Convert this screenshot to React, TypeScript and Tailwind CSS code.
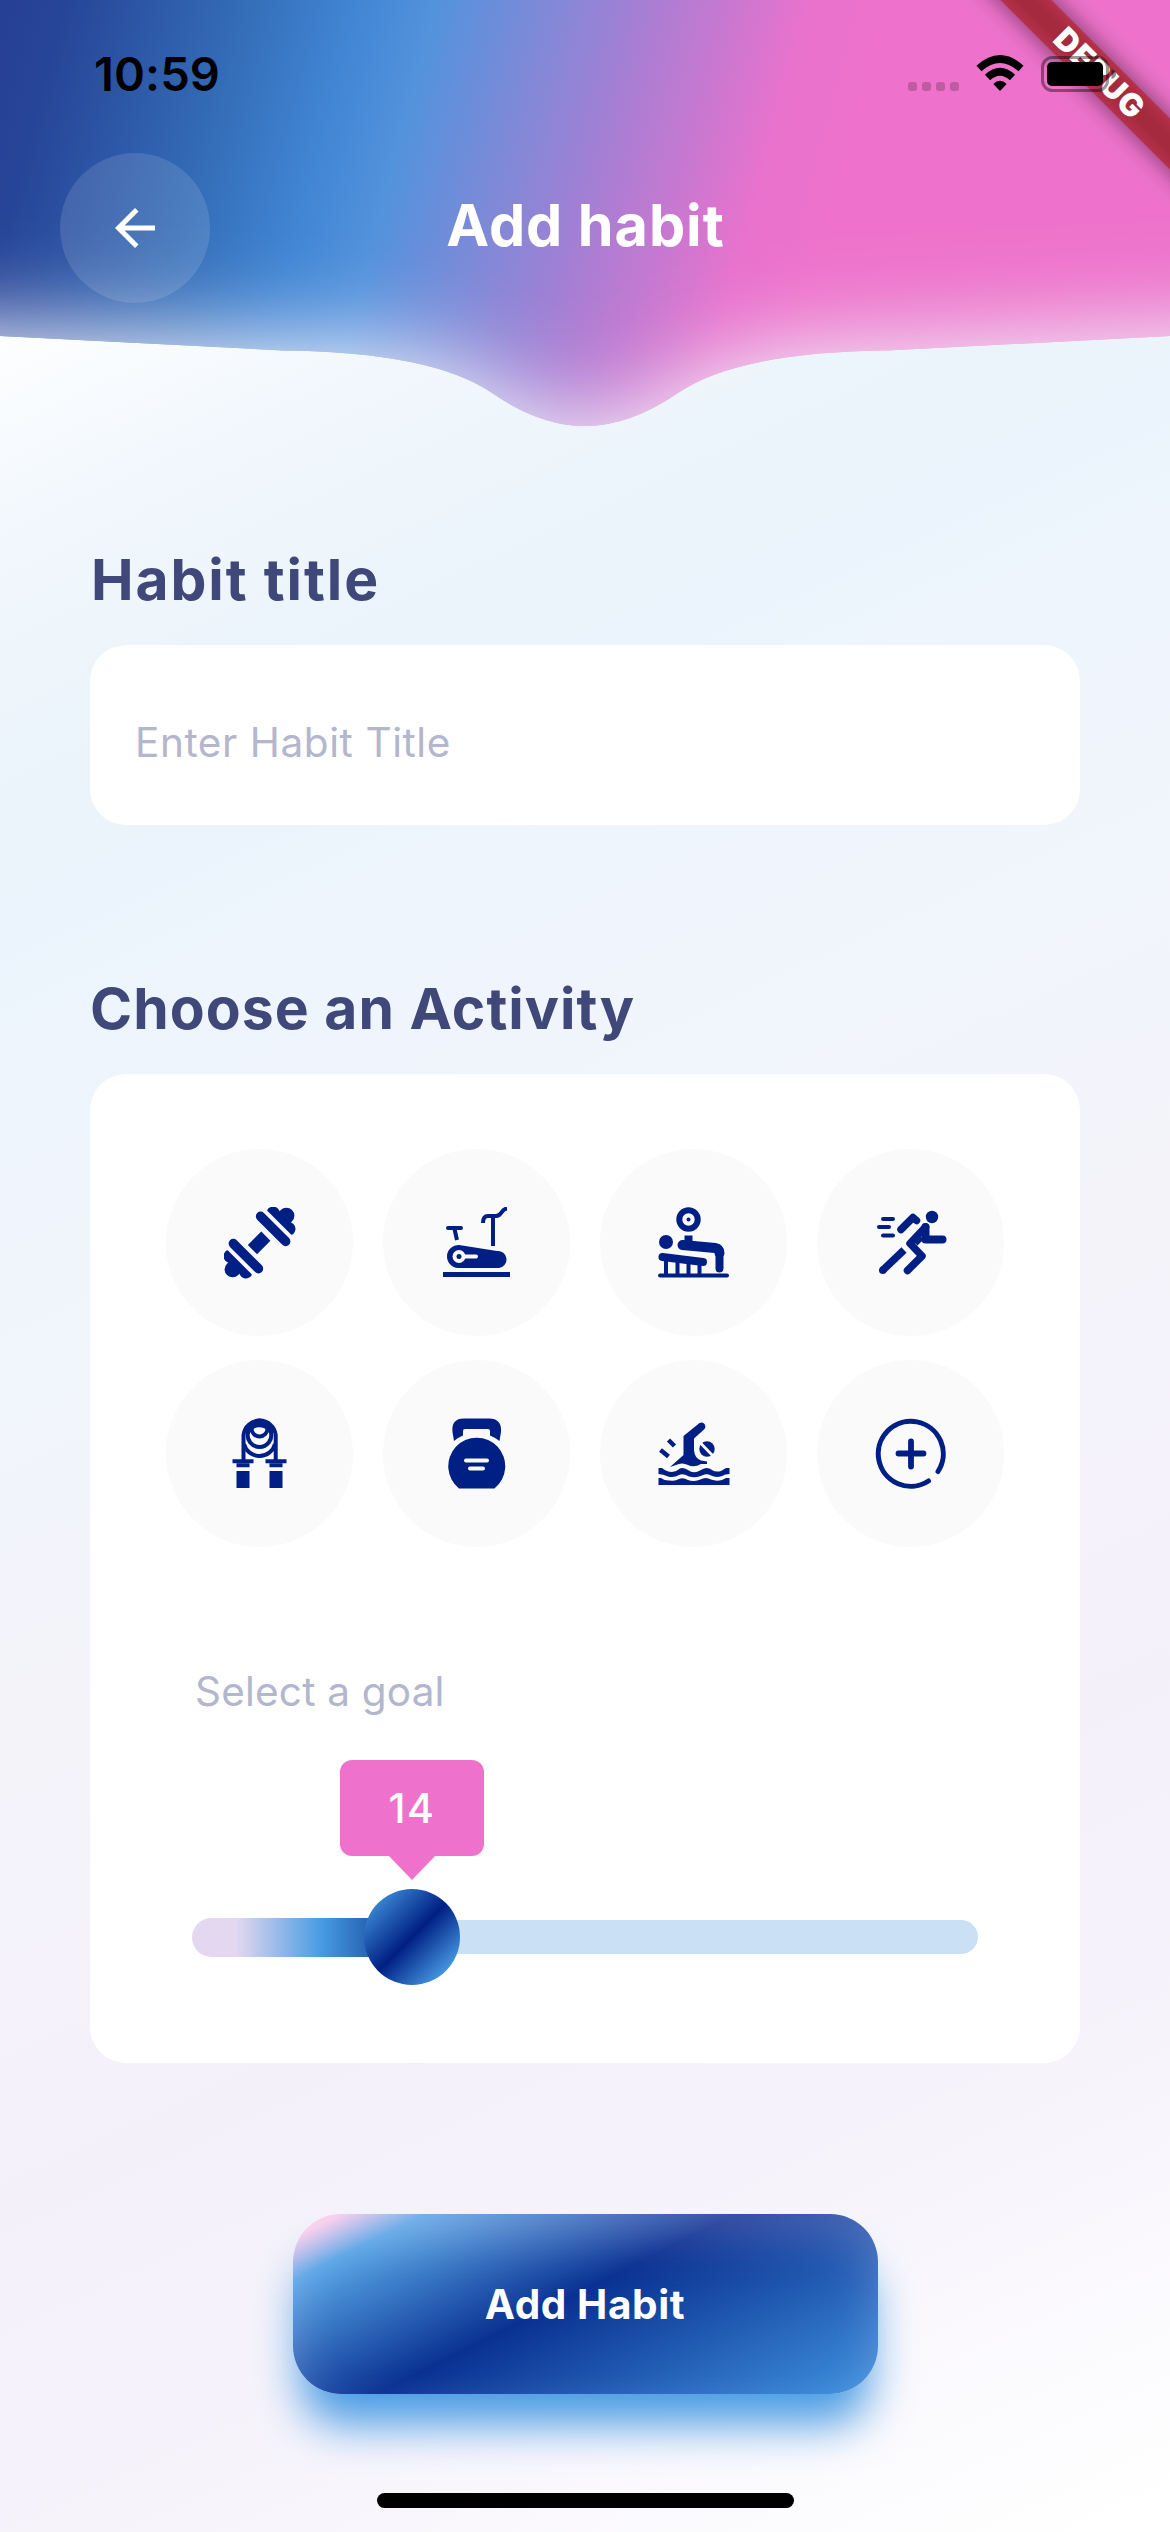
import type { ReactNode } from "react";

const NAVY = "#001f84";

function StatusBar() {
  return (
    <div className="absolute inset-x-0 top-0 z-20 flex h-[141px] justify-between pl-[94px] pr-[54px]">
      <div className="mt-[45px] h-[57px] text-[47px] font-semibold leading-[57px] tracking-[0.1px] text-black">
        10:59
      </div>
      <svg className="mt-[54px] h-[40px] w-[209px]" viewBox="906 54 209 40">
        {[907, 921, 935, 949].map((x) => (
          <rect key={x} x={x} y="82" width="9" height="9" rx="3" fill="#000" fillOpacity="0.2" />
        ))}
        <path d="M978 68.500 Q999 49.500 1020 68.500" fill="none" stroke="#000" strokeWidth="7.500" />
        <path d="M986.500 77.500 Q999 66 1011.500 77.500" fill="none" stroke="#000" strokeWidth="7.500" />
        <path d="M992.300 84 Q999 77.500 1005.700 84 L999 91Z" />
        <rect x="1041.500" y="57.500" width="65" height="33" rx="10" fill="none" stroke="#000" strokeOpacity="0.4" strokeWidth="3" />
        <rect x="1046" y="62" width="56" height="24" rx="5" />
        <path d="M1110.500 69 Q1115 70.500 1115 74 Q1115 77.500 1110.500 79Z" fillOpacity="0.45" />
      </svg>
    </div>
  );
}

function DebugBanner() {
  return (
    <div className="absolute right-0 top-0 z-10 h-[240px] w-[240px] overflow-hidden">
      <div className="absolute left-[-32px] top-[54px] h-[36px] w-[400px] rotate-45 bg-black/50 blur-[12px]" />
      <div className="absolute left-[-32px] top-[54px] flex h-[36px] w-[400px] rotate-45 items-center justify-center bg-[#b71c1ca0] pl-[4px] text-[31.500px] font-black leading-none tracking-[0.8px] text-white">
        DEBUG
      </div>
    </div>
  );
}

const HEADER_PATH =
  "M0 0H1170V336L887 350.500Q738 352 678 393Q630 426 585 426Q540 426 492 393Q432 352 283 350.500L0 336Z";
const HAZE_PATH =
  "M-200 318L0 328L283 342.500Q432 344 492 387Q540 422 585 422Q630 422 678 387Q738 344 887 342.500L1170 328L1370 318V700H-200Z";

function Header() {
  return (
    <header className="relative h-[426px]">
      <svg className="absolute inset-0 h-[426px] w-[1170px]" viewBox="0 0 1170 426">
        <defs>
          <linearGradient id="sky" gradientUnits="userSpaceOnUse" x1="0" y1="0" x2="1240" y2="323">
            <stop offset="0" stopColor="#253f95" />
            <stop offset="0.05" stopColor="#274598" />
            <stop offset="0.18" stopColor="#336bb6" />
            <stop offset="0.27" stopColor="#4186d4" />
            <stop offset="0.33" stopColor="#5392dc" />
            <stop offset="0.39" stopColor="#738cd9" />
            <stop offset="0.5" stopColor="#ad7dd3" />
            <stop offset="0.61" stopColor="#e872cd" />
            <stop offset="0.67" stopColor="#ee72cb" />
            <stop offset="1" stopColor="#ee72cb" />
          </linearGradient>
          <clipPath id="wave">
            <path d={HEADER_PATH} />
          </clipPath>
          <filter id="soft" filterUnits="userSpaceOnUse" x="-200" y="0" width="1570" height="720">
            <feGaussianBlur stdDeviation="45" />
          </filter>
        </defs>
        <g clipPath="url(#wave)">
          <rect width="1170" height="426" fill="url(#sky)" />
          <path d={HAZE_PATH} fill="#f0eef8" filter="url(#soft)" />
        </g>
      </svg>
      <div className="relative flex h-[303px] items-end px-[60px]">
        <button className="flex h-[150px] w-[150px] items-center justify-center rounded-full bg-white/12">
          <svg viewBox="0 0 24 24" className="h-[60px] w-[60px]" fill="#fff">
            <path d="M20 11H7.830l5.590-5.590L12 4l-8 8 8 8 1.410-1.410L7.830 13H20v-2z" />
          </svg>
        </button>
        <h1 className="flex h-[150px] flex-1 items-center justify-center pr-[149px] pb-[4px] text-[57.500px] font-bold leading-none tracking-[0.950px] text-white">
          Add habit
        </h1>
      </div>
    </header>
  );
}

function Dumbbell() {
  return (
    <g transform="translate(35.500 35.500) rotate(-45)" fill={NAVY}>
      <rect x="-10" y="-6.500" width="19" height="13" />
      <rect x="14.500" y="-22.500" width="9.500" height="45" rx="4.750" />
      <rect x="-24" y="-22.500" width="9.500" height="45" rx="4.750" />
      <path d="M28 -17 Q29 -18.500 32 -17.500 Q37 -16 37 -11 L35 0 L37 11 Q37 16 32 17.500 Q29 18.500 28 17Z" />
      <circle cx="38" cy="0" r="8" />
      <path d="M-28 -17 Q-29 -18.500 -32 -17.500 Q-37 -16 -37 -11 L-35 0 L-37 11 Q-37 16 -32 17.500 Q-29 18.500 -28 17Z" />
      <circle cx="-38" cy="0" r="8" />
    </g>
  );
}

function Bike() {
  return (
    <g>
      <rect x="2" y="65" width="67" height="5" fill={NAVY} />
      <path d="M18 38 L56 44 A8.500 8.500 0 0 1 58 61 H17 A11.500 11.500 0 0 1 18 38Z" fill={NAVY} />
      <g fill="none" stroke={NAVY} strokeLinecap="round">
        <path d="M7 21H20" strokeWidth="4" />
        <path d="M13.500 22L16 33" strokeWidth="4" strokeLinecap="butt" />
        <path d="M52 10V39" strokeWidth="4" strokeLinecap="butt" />
        <path d="M42 16C42 11 44 9 47 9H55C61 9 60 2 66 1.500" strokeWidth="4" strokeLinecap="butt" />
      </g>
      <path d="M18 49.500H35" stroke="#fafafa" strokeWidth="4" strokeLinecap="round" />
      <circle cx="18" cy="49.500" r="6.500" fill="#fafafa" />
      <circle cx="18" cy="49.500" r="2.500" fill={NAVY} />
    </g>
  );
}

function BenchPress() {
  return (
    <g fill="none" stroke={NAVY} strokeLinecap="round">
      <circle cx="30.500" cy="12.500" r="9.200" strokeWidth="6" />
      <circle cx="30.500" cy="12.500" r="2" fill={NAVY} stroke="none" />
      <rect x="26.500" y="28.500" width="8" height="8" fill={NAVY} stroke="none" />
      <circle cx="8" cy="35" r="7" fill={NAVY} stroke="none" />
      <path d="M24.500 38L57 41Q61.500 42 61.500 46" strokeWidth="10" />
      <path d="M61.500 44V61.500" strokeWidth="8" />
      <path d="M4.500 50L45 55" strokeWidth="8" />
      <path d="M8 50V69M19.500 53V69M30.500 54V69M41.500 55V69" strokeWidth="4" strokeLinecap="butt" />
      <path d="M2 68.500H69" strokeWidth="4" />
    </g>
  );
}

function Runner() {
  return (
    <g fill="none" stroke={NAVY}>
      <circle cx="57" cy="10" r="6.200" fill={NAVY} stroke="none" />
      <path d="M8 12H18M4 20H14M8 28.500H18" strokeWidth="4" strokeLinecap="round" />
      <path d="M26 22.500L38 10.500L41.500 13.500" strokeWidth="7.500" strokeLinejoin="round" strokeLinecap="round" />
      <path d="M50.500 20L35 36.500L47 49L32.500 63.500" strokeWidth="7.500" strokeLinejoin="round" strokeLinecap="round" />
      <path d="M50.500 20V32.500H67.500" strokeWidth="8" strokeLinejoin="round" strokeLinecap="round" />
      <path d="M46 30L40 36" strokeWidth="7" />
      <path d="M29 43L7.500 63.500" strokeWidth="7.500" />
      <circle cx="7.800" cy="63.200" r="3.800" fill={NAVY} stroke="none" />
    </g>
  );
}

function JumpRope() {
  return (
    <g fill="none" stroke={NAVY}>
      <path d="M19.500 42V17A16.200 16.200 0 0 1 51.700 17V42" strokeWidth="4" />
      <path d="M22.500 15A14 14 0 0 1 48.500 15" strokeWidth="6" />
      <circle cx="35.500" cy="10.500" r="8" strokeWidth="4" />
      <path d="M24 14.500A11.800 11.800 0 1 0 47 14.500" strokeWidth="4" />
      <path d="M20 26A16 16 0 0 0 51 26" strokeWidth="4" />
      <path d="M8.500 43.200H29.500M41.500 43.200H62.500" strokeWidth="4" />
      <path d="M12.500 47.300H25.500M45.500 47.300H58.500" strokeWidth="4" />
      <path d="M12.500 61.500H25.500M45.500 61.500H58.500" strokeWidth="17" />
    </g>
  );
}

function Kettlebell() {
  return (
    <g fill={NAVY}>
      <path d="M13 23L11.500 14Q10 0.500 23 0.500H48Q61 0.500 60 14L58.500 23Q55 20 49 17.500L49 13Q49 11 47 11H24Q22 11 22 13V17.500Q16 20 13 23Z" />
      <path d="M18 70.500A28.500 28.500 0 1 1 53.500 70.500Z" />
      <path d="M25 42.500H46M29 50.500H42" stroke="#fafafa" strokeWidth="4" strokeLinecap="round" />
    </g>
  );
}

function Swimmer() {
  return (
    <g fill={NAVY}>
      <path d="M25.500 18L41.500 5Q44.500 3.500 46.500 6Q48.500 9 46 11.500L36 20.500V32Q36.500 40 43 42.500L49 43.500V46L43 46Q36 50 30 47Q24 44 18 47L12 49L25.500 37Z" />
      <circle cx="49" cy="31" r="7.700" />
      <path d="M41.500 24L56 39" stroke="#fafafa" strokeWidth="2.800" />
      <path d="M10.500 22L16.500 28M2.500 32L10.500 38.500" stroke={NAVY} strokeWidth="4.500" />
      <path d="M0.500 50H4Q9 54 14 54Q18 54 22 50.500Q25 49 30 52Q35 56 41 53L46 50.500Q50 49 54 52Q58 54.500 63 53L68 50H71.500V56Q67 56 64 58Q58 60 53 57.500Q49 55 44 57.500Q38 60.500 31 58.500Q25 55 21 57Q16 60 10 58.500Q5 56 0.500 56Z" />
      <path d="M0.500 60H3Q7 63 12 62.500Q17 63.500 21 61Q25 59 30 62Q35 64 41 62L45 60.500Q49 59 53 61.500Q58 63.500 64 62L68 60H71.500V67H0.500Z" />
    </g>
  );
}

function AddOther() {
  return (
    <g fill="none" stroke={NAVY} strokeLinecap="round">
      <path d="M53.500 63A32.500 32.500 0 1 1 63 53.500" strokeWidth="5" />
      <path d="M36 23.500V48.500M23.500 35.500H48.500" strokeWidth="5.800" />
    </g>
  );
}

const ACTIVITIES: { name: string; icon: ReactNode }[] = [
  { name: "Weights", icon: <Dumbbell /> },
  { name: "Bike", icon: <Bike /> },
  { name: "Bench press", icon: <BenchPress /> },
  { name: "Running", icon: <Runner /> },
  { name: "Jump rope", icon: <JumpRope /> },
  { name: "Kettlebell", icon: <Kettlebell /> },
  { name: "Swimming", icon: <Swimmer /> },
  { name: "Other", icon: <AddOther /> },
];

function GoalSlider() {
  return (
    <div className="ml-[102px] w-[786px]">
      <div className="relative ml-[148px] flex h-[96px] w-[144px] items-center justify-center rounded-[12px] bg-[#ee72cb] pt-[2px] text-[41px] font-medium tracking-[1.500px] text-white">
        14
        <svg className="absolute left-[48px] top-[95px] h-[25px] w-[48px]" viewBox="0 0 48 25">
          <path d="M0 0H48L24 25Z" fill="#ee72cb" />
        </svg>
      </div>
      <div className="relative mt-[33px] flex h-[96px] items-center">
        <div className="h-[39px] w-[220px] shrink-0 rounded-l-full bg-[linear-gradient(90deg,#e4d8f0_20%,#479be2_59%,#2864b3_80%,#001f84_100%)]" />
        <div className="h-[34px] flex-1 rounded-r-full bg-[#cae0f5]" />
        <div className="absolute left-[172px] top-0 h-[96px] w-[96px] rounded-full bg-[linear-gradient(135deg,#479be2_5%,#001f84_50%,#479be2_87%)]" />
      </div>
    </div>
  );
}

export default function App() {
  return (
    <main className="relative flex h-[2532px] w-[1170px] flex-col overflow-hidden bg-[linear-gradient(155.200deg,#fff_10%,#f1f7fd_18%,#ebf4fb_26%,#ebf4fc_31%,#eff5fd_38%,#f2f5fc_47%,#f5f3fa_58%,#f3f0f9_72%,#f6f3fb_83%,#fff_99%)] font-['Inter',sans-serif]">
      <StatusBar />
      <DebugBanner />
      <Header />

      <section className="mt-[118px] px-[90px]">
        <h2 className="h-[72px] pl-px text-[57px] font-bold leading-[72px] tracking-[1.900px] text-[#404779]">Habit title</h2>
        <div className="mt-[29px] flex h-[180px] items-center rounded-[36px] bg-white px-[45px] pt-[16px] text-[40.500px] tracking-[0.580px] text-[#b3b6cd]">
          Enter Habit Title
        </div>
      </section>

      <section className="mt-[148px] px-[90px]">
        <h2 className="h-[72px] text-[57px] font-bold leading-[72px] tracking-[1.050px] text-[#404779]">
          Choose an Activity
        </h2>
        <div className="mt-[29px] h-[989px] rounded-[36px] bg-white pt-[75px]">
          <div className="ml-[76px] grid w-[838px] grid-cols-4 gap-x-[30px] gap-y-[24px]">
            {ACTIVITIES.map((a) => (
              <button
                key={a.name}
                aria-label={a.name}
                className="flex h-[187px] w-[187px] items-center justify-center rounded-full bg-[#fafafa]"
              >
                <svg viewBox="0 0 72 72" className="h-[72px] w-[72px]">
                  {a.icon}
                </svg>
              </button>
            ))}
          </div>
          <div className="ml-[105px] mt-[120px] h-[50px] text-[40.500px] leading-[50px] tracking-[0.200px] text-[#b3b6cd]">
            Select a goal
          </div>
          <div className="mt-[43px]">
            <GoalSlider />
          </div>
        </div>
      </section>

      <div className="mt-[151px] flex justify-center">
        <button className="h-[180px] w-[585px] rounded-[48px] bg-[linear-gradient(153.400deg,#f8cdec_5%,#57a6e6_14%,#0a3192_47%,#3f92de_100%)] pt-[3px] text-[40.500px] font-bold tracking-[0.600px] text-white shadow-[0_39px_45px_-9px_#479be3,inset_0_24px_48px_rgba(255,225,250,0.22)]">
          Add Habit
        </button>
      </div>

      <div className="mx-auto mt-[99px] h-[15px] w-[417px] rounded-full bg-black" />
    </main>
  );
}
